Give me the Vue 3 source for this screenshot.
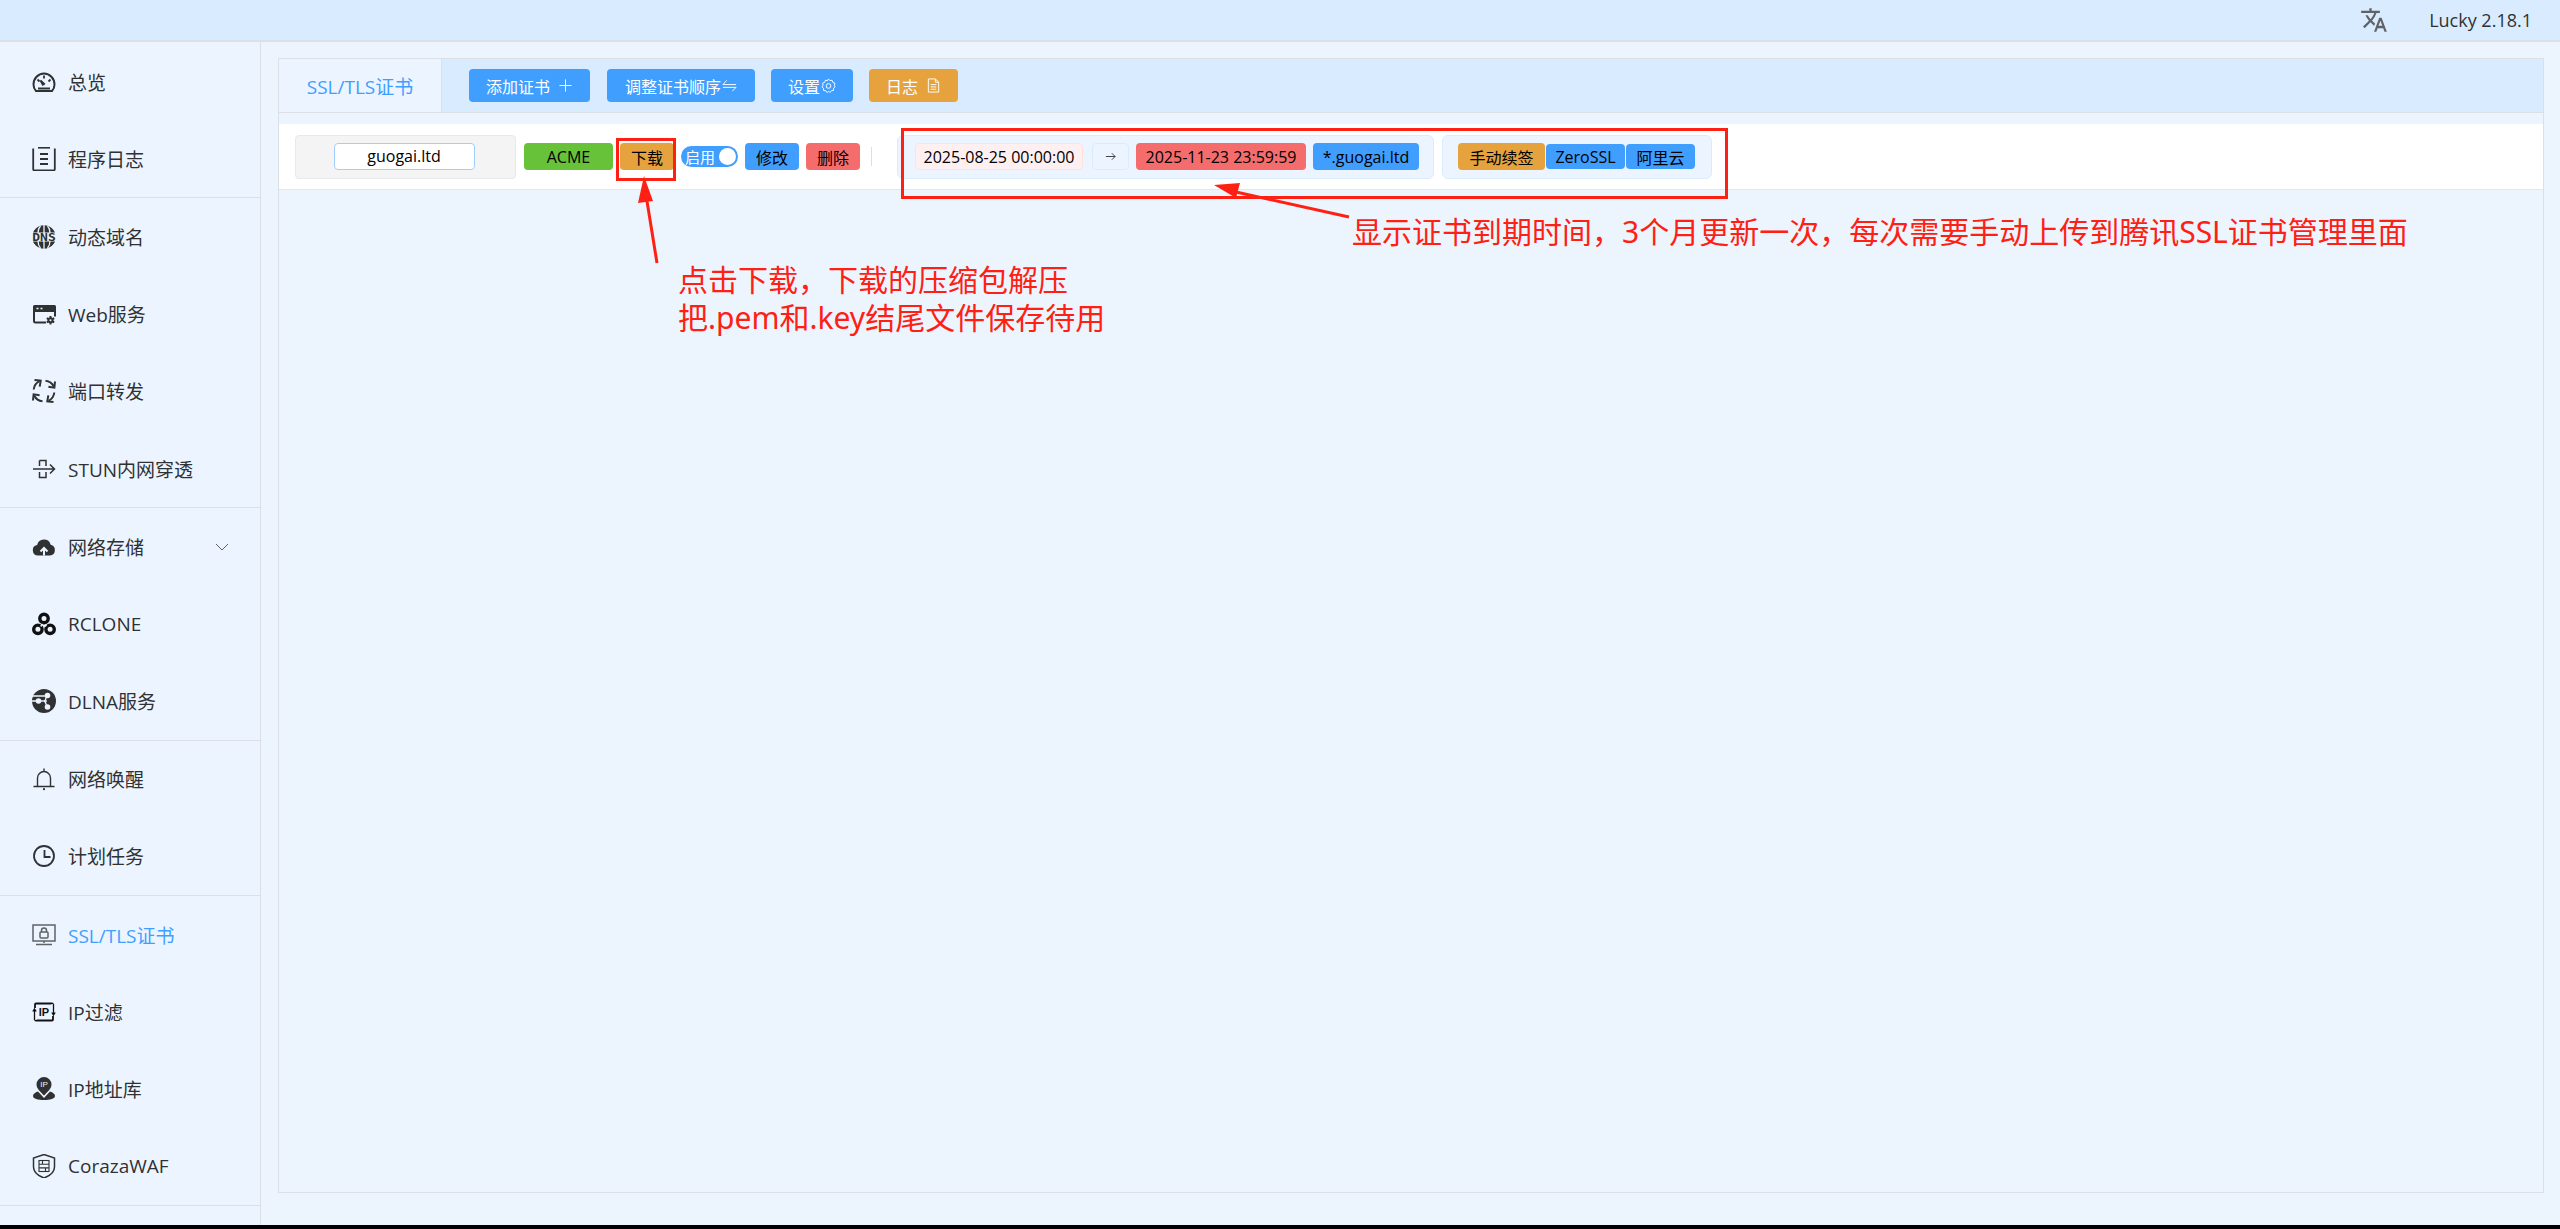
<script setup>
const c = '#303133'
const bg = '#ecf5ff'
const arrow = `<path d="M13.500 1.700c3.600.4 6.700 2.600 8.300 5.800" fill="none" stroke="${c}" stroke-width="2"/><path d="M23 2.500l-.6 6.200-6-1" fill="none" stroke="${c}" stroke-width="2"/>`
const groups = [
  [
    { label: '总览', icon: `<path d="M4 21C2.400 19.300 1.500 17 1.500 14.500 1.500 8.400 6.200 3.500 12 3.500s10.500 4.900 10.500 11c0 2.500-.9 4.800-2.500 6.500z" fill="none" stroke="${c}" stroke-width="2"/><path d="M12 5.500v3M5.500 9.500l2 2M18.500 9.500l-2 2M11.200 15.500L8.500 10.500l4.300 4" fill="none" stroke="${c}" stroke-width="1.800"/><path d="M6 18.500h12" stroke="${c}" stroke-width="2"/>` },
    { label: '程序日志', icon: `<path d="M6 .8h12" stroke="${c}" stroke-width="1.600"/><path d="M1.200 1.500v20.500a1.500 1.500 0 001.500 1.500h18.600a1.500 1.500 0 001.500-1.500V1.500" fill="none" stroke="${c}" stroke-width="1.800"/><path d="M8 7h8M8 12h8M8 17h8" stroke="${c}" stroke-width="2"/>` }
  ],
  [
    { label: '动态域名', icon: `<circle cx="12" cy="12" r="11.800" fill="${c}"/><path d="M12 0v24M8.500 1C6.500 3 6 5 6 8M15.500 1c2 2 2.500 4 2.500 7M8.500 23C6.500 21 6 19 6 16M15.500 23c2-2 2.500-4 2.500-7" stroke="${bg}" stroke-width="1.300" fill="none"/><rect x="-1" y="7.500" width="26" height="9" fill="${bg}"/><text x="12" y="15.800" text-anchor="middle" textLength="23.500" lengthAdjust="spacingAndGlyphs" font-family="DejaVu Sans Mono, monospace" font-weight="700" font-size="10.500" fill="${c}">DNS</text>` },
    { label: 'Web服务', icon: `<path d="M2.500 3h20A1.500 1.500 0 0124 4.500V10H1V4.500A1.500 1.500 0 012.500 3z" fill="${c}"/><path d="M2 9v10a1.500 1.500 0 001.500 1.500H14" fill="none" stroke="${c}" stroke-width="2"/><path d="M23 9v5.500" stroke="${c}" stroke-width="2"/><path d="M4.500 6.500h2M8.500 6.500h2" stroke="${bg}" stroke-width="1.500"/><g stroke="${c}" stroke-width="2"><path d="M18.500 14v8.500M14.800 16.100l7.400 4.300M22.200 16.100l-7.400 4.300"/></g><circle cx="18.500" cy="18.200" r="3" fill="${c}"/><circle cx="18.500" cy="18.200" r="1" fill="${bg}"/>` },
    { label: '端口转发', icon: `<g>${arrow}</g><g transform="rotate(90 12 12)">${arrow}</g><g transform="rotate(180 12 12)">${arrow}</g><g transform="rotate(270 12 12)">${arrow}</g>` },
    { label: 'STUN内网穿透', icon: `<path d="M7.500 3.500H14V9M14 15v5.500H7.500V15M7.500 3.500V9M1 12h21.500M18 7.500l4.500 4.500-4.500 4.500" fill="none" stroke="${c}" stroke-width="1.500"/>` }
  ],
  [
    { label: '网络存储', arrow: true, icon: `<path d="M6 20.500a5.300 5.300 0 01-.9-10.500 7 7 0 0113.600-.3A5.500 5.500 0 0118 20.500z" fill="${c}"/><path d="M12 20.500v-7.500M8.500 16.500L12 13l3.500 3.500" fill="none" stroke="${bg}" stroke-width="2"/>` },
    { label: 'RCLONE', icon: `<circle cx="12" cy="6.500" r="4.200" fill="none" stroke="#111" stroke-width="3.400"/><circle cx="5.900" cy="17.300" r="4.200" fill="none" stroke="#111" stroke-width="3.400"/><circle cx="18.100" cy="17.300" r="4.200" fill="none" stroke="#111" stroke-width="3.400"/><path d="M10.500 12l-1.800 2.500M14.500 12.500l-1.300 2" stroke="${bg}" stroke-width="1.400"/>` },
    { label: 'DLNA服务', icon: `<circle cx="12" cy="12" r="12" fill="${c}"/><path d="M0 7h14M0 12h8M12 12c2 0 2-5 3-5M12 12c2 0 2 5 3 5" stroke="${bg}" stroke-width="1.400" fill="none"/><circle cx="15.500" cy="6.500" r="2.800" fill="${bg}"/><circle cx="6.500" cy="12" r="2.800" fill="${bg}"/><circle cx="15.500" cy="18" r="2.800" fill="${bg}"/><path d="M6.500 12H15" stroke="${bg}" stroke-width="1.400"/>` }
  ],
  [
    { label: '网络唤醒', icon: `<path d="M5.500 19.500V11a6.500 6.500 0 0113 0v8.500M1.500 19.500h21M12 1.500v3" fill="none" stroke="${c}" stroke-width="1.400"/><circle cx="12" cy="22.200" r="1.100" fill="${c}"/>` },
    { label: '计划任务', icon: `<circle cx="12" cy="12" r="10" fill="none" stroke="${c}" stroke-width="1.800"/><path d="M12.500 6v7h6" fill="none" stroke="${c}" stroke-width="1.800"/>` }
  ],
  [
    { label: 'SSL/TLS证书', active: true, icon: `<rect x="1" y="2" width="22" height="16" fill="none" stroke="#606266" stroke-width="1.500"/><rect x="8" y="9" width="8" height="6" rx="1" fill="none" stroke="#606266" stroke-width="1.500"/><path d="M9.500 9V7.500a2.500 2.500 0 015 0V9M12 18v2M4 21.500h16" fill="none" stroke="#606266" stroke-width="1.500"/>` },
    { label: 'IP过滤', icon: `<rect x="3" y="3.500" width="18" height="17" rx="1" fill="none" stroke="#111" stroke-width="1.800"/><rect x=".5" y="8" width="4" height="12" fill="${bg}"/><rect x="19.500" y="4" width="4" height="12" fill="${bg}"/><text x="12" y="16.200" text-anchor="middle" font-family="Liberation Sans, sans-serif" font-weight="700" font-size="11" fill="#111">IP</text><path d="M2.500 20v-10M.8 11.500l1.700-2.500 1.700 2.500M21.500 4v10M19.800 12.500l1.700 2.500 1.700-2.500" fill="none" stroke="#111" stroke-width="1.300"/>` },
    { label: 'IP地址库', icon: `<path d="M12 0a7.500 7.500 0 00-7.500 7.500c0 4 4 7.500 7.500 11 3.500-3.500 7.500-7 7.500-11A7.500 7.500 0 0012 0z" fill="${c}"/><path d="M6 14.500C3 15.500 1 17 1 19c0 2.800 5 4 11 4s11-1.200 11-4c0-2-2-3.500-5-4.500l-6 6.500z" fill="${c}"/><text x="12" y="10.200" text-anchor="middle" font-family="Liberation Sans, sans-serif" font-size="8" fill="${bg}">IP</text>` },
    { label: 'CorazaWAF', icon: `<path d="M12 .5l10.500 3.500V13c0 4.500-4 8.500-10.500 11C5.500 21.500 1.500 17.500 1.500 13V4z" fill="none" stroke="${c}" stroke-width="1.500"/><rect x="7" y="6.500" width="10" height="11" fill="none" stroke="${c}" stroke-width="1.100"/><path d="M7 10.200h10M7 13.900h10M10.500 6.500v3.700M13.500 13.900v3.600" stroke="${c}" stroke-width="1.100"/>` }
  ]
]

const toolButtons = [
  { label: '添加证书', type: 'add' },
  { label: '调整证书顺序', type: 'order' },
  { label: '设置', type: 'setting' },
  { label: '日志', type: 'log' }
]
</script>

<template>
  <div class="page">
    <header class="topbar">
      <svg class="lang" viewBox="0 0 24 24"><path fill="#606266" d="M12.870 15.070l-2.540-2.510.03-.03c1.740-1.940 2.980-4.170 3.710-6.530H17V4h-7V2H8v2H1v1.990h11.170C11.500 7.920 10.440 9.750 9 11.350 8.070 10.320 7.300 9.190 6.690 8h-2c.73 1.630 1.730 3.170 2.980 4.560l-5.090 5.020L4 19l5-5 3.110 3.110.76-2.040zM18.500 10h-2L12 22h2l1.120-3h4.750L21 22h2l-4.500-12zm-2.620 7l1.620-4.330L19.120 17h-3.240z"/></svg>
      <span class="version">Lucky 2.18.1</span>
    </header>

    <div class="body">
      <aside class="sidebar">
        <div v-for="(group, i) in groups" :key="i" class="menu-group">
          <div v-for="item in group" :key="item.label" class="menu-item" :class="{ active: item.active }">
            <svg class="menu-icon" viewBox="0 0 24 24" v-html="item.icon"></svg>
            <span>{{ item.label }}</span>
            <svg v-if="item.arrow" class="menu-arrow" viewBox="0 0 14 8"><path d="M1 1l6 6 6-6" fill="none" stroke="#606266" stroke-width="1"/></svg>
          </div>
        </div>
      </aside>

      <main class="main">
        <section class="panel">
          <div class="panel-head">
            <div class="tab">SSL/TLS证书</div>
            <div class="tools">
              <button v-for="b in toolButtons" :key="b.type" class="tool" :class="'tool-' + b.type">
                {{ b.label }}
                <svg v-if="b.type === 'add'" class="tool-icon" viewBox="0 0 16 16"><path d="M8 1.500v13M1.500 8h13" stroke="#fff" stroke-width="1" fill="none"/></svg>
                <svg v-if="b.type === 'order'" class="tool-icon" viewBox="0 0 16 16"><path d="M5 2.500L1 7h14M1 10h14l-4 4" stroke="#fff" stroke-width="1" fill="none"/></svg>
                <svg v-if="b.type === 'setting'" class="tool-icon" viewBox="0 0 16 16"><path d="M8 1l1.500 1.800 2.300-.4.8 2.200 2.200.9-.5 2.300L15 9.500l-1.700 1.500v2.300l-2.300.3L9.500 15.500 8 14l-1.500 1.500L5 13.600l-2.300-.3V11L1 9.500l1.200-1.700-.5-2.300 2.200-.9.800-2.200 2.300.4z" stroke="#fff" stroke-width="1" fill="none"/><circle cx="8" cy="8.500" r="2.500" stroke="#fff" stroke-width="1" fill="none"/></svg>
                <svg v-if="b.type === 'log'" class="tool-icon" viewBox="0 0 16 16"><path d="M2.500 1h7.500l3.500 3.500v10.500h-11zM10 1v3.500h3.500M5 7h6M5 9.500h6M5 12h6" stroke="#fff" stroke-width="1" fill="none"/></svg>
              </button>
            </div>
          </div>

          <div class="cert-row">
            <div class="domain-box"><div class="domain-input">guogai.ltd</div></div>
            <span class="tag w-acme green">ACME</span>
            <span class="tag w-btn orange">下载</span>
            <span class="switch">启用<i class="knob"></i></span>
            <span class="tag w-btn blue">修改</span>
            <span class="tag w-btn red">删除</span>
            <i class="divider"></i>
            <div class="group group-dates">
              <span class="tag w-date pale-red">2025-08-25 00:00:00</span>
              <span class="tag w-arrow pale-blue">
                <svg width="11" height="11" viewBox="0 0 12 12"><path d="M1 6h10M7.500 2.500L11 6 7.500 9.500" fill="none" stroke="#303133"/></svg>
              </span>
              <span class="tag w-date2 red">2025-11-23 23:59:59</span>
              <span class="tag w-host blue">*.guogai.ltd</span>
            </div>
            <div class="group group-ca">
              <span class="tag w-renew orange">手动续签</span>
              <span class="tag w-zero blue slim">ZeroSSL</span>
              <span class="tag w-ali blue slim">阿里云</span>
            </div>
          </div>
        </section>
      </main>
    </div>

    <!-- red markup drawn on top of the screenshot -->
    <div class="mark mark-download"></div>
    <div class="mark mark-dates"></div>
    <svg class="arrows" width="2560" height="1229" viewBox="0 0 2560 1229">
      <path d="M657 263L646 195" stroke="#ff2014" stroke-width="3" fill="none"/>
      <path d="M644 176L638 203 653 201z" fill="#ff2014"/>
      <path d="M1349 217L1236 192" stroke="#ff2014" stroke-width="3" fill="none"/>
      <path d="M1214 185L1240 183 1236 198z" fill="#ff2014"/>
    </svg>
    <div class="note note-left">点击下载，下载的压缩包解压<br>把.pem和.key结尾文件保存待用</div>
    <div class="note note-right">显示证书到期时间，3个月更新一次，每次需要手动上传到腾讯SSL证书管理里面</div>
  </div>
</template>

<style>
html, body { margin: 0; background: #000; }
</style>

<style scoped>
.page {
  position: relative;
  display: flex;
  flex-direction: column;
  height: 1225px;
  overflow: hidden;
  background: #ecf4fe;
  color: #303133;
  font-family: "Open Sans", "Noto Sans CJK SC", sans-serif;
}

.topbar {
  display: flex;
  align-items: center;
  justify-content: flex-end;
  flex: none;
  height: 40px;
  padding-right: 28px;
  background: #d9ecff;
  border-bottom: 2px solid #dcdfe6;
}
.lang { width: 28px; height: 28px; margin-right: 41px; }
.version { font-size: 18px; }

.body { display: flex; flex: 1; min-height: 0; }

.sidebar {
  flex: none;
  width: 260px;
  padding-top: 1px;
  background: #ecf5ff;
  border-right: 1px solid #dcdfe6;
}
.menu-group { border-bottom: 1px solid #dcdfe6; }
.menu-item {
  display: flex;
  align-items: center;
  height: 77.2px;
  padding: 0 28px 0 32px;
  font-size: 19px;
  gap: 12px;
}
.menu-item.active { color: #409eff; }
.menu-icon { flex: none; width: 24px; height: 24px; }
.menu-arrow { width: 14px; height: 8px; margin-left: auto; margin-right: 3px; }

.main { flex: 1; min-width: 0; padding: 16px 16px 32px 17px; }
.panel { height: 100%; box-sizing: border-box; border: 1px solid #dcdfe6; }

.panel-head {
  display: flex;
  height: 53px;
  background: #d9ecff;
  border-bottom: 1px solid #dcdfe6;
}
.tab {
  display: flex;
  align-items: center;
  justify-content: center;
  width: 162px;
  background: #ecf5ff;
  border-right: 1px solid #dcdfe6;
  color: #409eff;
  font-size: 19px;
}
.tools { display: flex; align-items: center; gap: 16px; padding-left: 27px; }
.tool {
  display: flex;
  align-items: center;
  justify-content: center;
  height: 33px;
  padding: 0;
  border: 0;
  border-radius: 4px;
  background: #409eff;
  color: #fff;
  font: inherit;
  font-size: 16px;
}
.tool-add { width: 121px; gap: 8px; margin-right: 1px; }
.tool-order { width: 148px; gap: 1px; }
.tool-setting { width: 82px; gap: 1px; }
.tool-log { width: 89px; gap: 8px; background: #e6a23c; }
.tool-icon { width: 15px; height: 15px; }

.cert-row {
  display: flex;
  align-items: center;
  height: 65px;
  margin-top: 11px;
  padding-left: 16px;
  background: #fff;
  border-bottom: 1px solid #e4e7ed;
  font-size: 16px;
  color: #000;
}
.domain-box {
  display: flex;
  align-items: center;
  justify-content: center;
  box-sizing: border-box;
  width: 221px;
  height: 44px;
  margin-right: 8px;
  padding-right: 3px;
  background: #f4f4f5;
  border: 1px solid #e9e9eb;
  border-radius: 4px;
}
.domain-input {
  box-sizing: border-box;
  width: 141px;
  height: 27px;
  line-height: 25px;
  text-align: center;
  background: #fff;
  border: 1px solid #a0cfff;
  border-radius: 4px;
}

.tag {
  display: inline-flex;
  align-items: center;
  justify-content: center;
  box-sizing: border-box;
  height: 27px;
  border-radius: 4px;
  white-space: nowrap;
}
.slim { height: 25px; }
.green { background: #67c23a; }
.orange { background: #e6a23c; }
.blue { background: #409eff; }
.red { background: #f56c6c; }
.pale-red { background: #fef0f0; border: 1px solid #fde2e2; }
.pale-blue { background: #ecf5ff; border: 1px solid #d9ecff; }

.w-acme { width: 89px; margin-right: 7px; }
.w-btn { width: 54px; margin-right: 7px; }
.w-date { width: 168px; margin-right: 2px; }
.w-arrow { width: 37px; }
.w-date2 { width: 170px; }
.w-host { width: 106px; }
.w-renew { width: 87px; }
.w-zero { width: 79px; }
.w-ali { width: 69px; }

.switch {
  display: flex;
  align-items: center;
  justify-content: space-between;
  box-sizing: border-box;
  width: 57px;
  height: 21px;
  margin-right: 7px;
  padding: 0 2px 0 4px;
  background: #409eff;
  border-radius: 11px;
  color: #fff;
  font-size: 15px;
}
.knob { width: 17px; height: 17px; background: #fff; border-radius: 50%; }

.divider {
  width: 1px;
  height: 19px;
  margin: 0 25px 0 4px;
  background: #dcdfe6;
}

.group {
  display: flex;
  align-items: center;
  box-sizing: border-box;
  height: 44px;
  background: #ecf5ff;
  border: 1px solid #d9ecff;
  border-radius: 6px;
}
.group-dates { width: 537px; padding-left: 17px; margin-right: 8px; gap: 7px; }
.group-ca { width: 270px; padding-left: 15px; gap: 1px; }

.mark {
  position: absolute;
  box-sizing: border-box;
  border: 3px solid #ff2014;
}
.mark-download { left: 616px; top: 138px; width: 60px; height: 43px; }
.mark-dates { left: 901px; top: 128px; width: 827px; height: 71px; }
.arrows { position: absolute; left: 0; top: 0; pointer-events: none; }

.note {
  position: absolute;
  color: #ff2014;
  font-size: 30px;
  line-height: 38px;
  white-space: nowrap;
  font-family: "Noto Sans", "Noto Sans CJK SC", sans-serif;
}
.note-left { left: 678px; top: 261px; }
.note-right { left: 1352px; top: 213px; }
</style>
